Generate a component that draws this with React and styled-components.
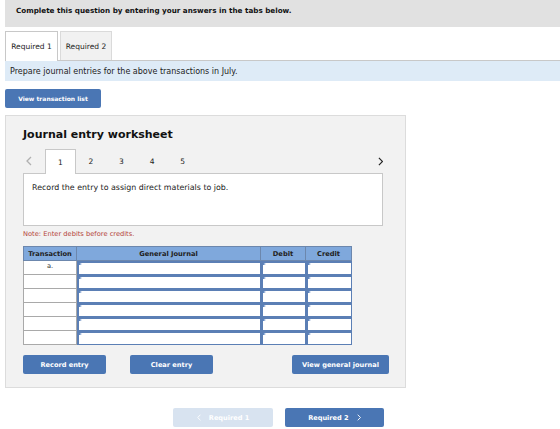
import React from 'react';
import styled, { createGlobalStyle } from 'styled-components';

const GlobalStyle = createGlobalStyle`
  body {
    margin: 0;
    background: #fff;
    font-family: "DejaVu Sans", Verdana, sans-serif;
    color: #222;
  }
`;

const Page = styled.div`
  width: 560px;
  height: 429px;
  padding-left: 5px;
  box-sizing: border-box;
  overflow: hidden;
`;

const Banner = styled.div`
  height: 27px;
  background: #e1e1e1;
  padding: 6px 0 0 11px;
  box-sizing: border-box;
  font-size: 7.2px;
  font-weight: bold;
  color: #111;
`;

const TabRow = styled.div`
  display: flex;
  gap: 2px;
  margin-top: 4px;
  height: 29px;
`;

const Tab = styled.div`
  width: ${({ wide }) => wide}px;
  box-sizing: border-box;
  border: 1px solid ${({ active }) => (active ? '#c8c8c8' : '#dadada')};
  border-bottom: none;
  background: ${({ active }) => (active ? '#fff' : '#f1f1f1')};
  font-size: 7.5px;
  display: flex;
  align-items: center;
  justify-content: center;
  color: #222;
  position: relative;
  z-index: 1;
  margin-bottom: ${({ active }) => (active ? '-1px' : '0')};
  height: ${({ active }) => (active ? '30px' : '29px')};
`;

const InfoBand = styled.div`
  height: 21px;
  border-top: 1px solid #c8c8c8;
  background: #deebf7;
  padding-left: 5px;
  box-sizing: border-box;
  font-size: 8px;
  display: flex;
  align-items: center;
`;

const Button = styled.div`
  width: ${({ wide }) => wide}px;
  height: 19px;
  background: ${({ disabled }) => (disabled ? '#d8e3f0' : '#4a76b4')};
  color: #fff;
  border-radius: 2px;
  font-size: ${({ small }) => (small ? '6px' : '6.6px')};
  font-weight: bold;
  display: flex;
  align-items: center;
  justify-content: center;
  gap: 8px;
`;

const TopAction = styled.div`
  margin-top: 8px;
`;

const Panel = styled.div`
  margin-top: 7px;
  width: 401px;
  height: 273px;
  box-sizing: border-box;
  background: #f2f2f2;
  border: 1px solid #dcdcdc;
  padding: 0 0 0 17px;
`;

const Title = styled.div`
  font-size: 11px;
  font-weight: bold;
  color: #111;
  margin-top: 12px;
  height: 14px;
`;

const StepNav = styled.div`
  display: flex;
  align-items: stretch;
  height: 24px;
  margin-top: 7px;
  width: 360px;
  position: relative;
  z-index: 1;
`;

const Arrow = styled.div`
  width: 22px;
  display: flex;
  align-items: center;
  justify-content: ${({ right }) => (right ? 'flex-end' : 'flex-start')};
  padding-left: ${({ right }) => (right ? '0' : '3px')};
  margin-left: ${({ right }) => (right ? 'auto' : '0')};
  box-sizing: border-box;
`;

const Step = styled.div`
  width: 30.6px;
  box-sizing: border-box;
  display: flex;
  align-items: center;
  justify-content: center;
  font-size: 7.5px;
  background: ${({ active }) => (active ? '#fff' : 'transparent')};
  border: 1px solid ${({ active }) => (active ? '#c8c8c8' : 'transparent')};
  border-bottom: none;
  height: ${({ active }) => (active ? '25px' : '24px')};
`;

const Prompt = styled.div`
  width: 360px;
  height: 53px;
  box-sizing: border-box;
  background: #fff;
  border: 1px solid #c8c8c8;
  padding: 9px 0 0 8px;
  font-size: 7.9px;
`;

const Note = styled.div`
  color: #b5453a;
  font-size: 6.7px;
  margin-top: 4px;
  height: 16px;
`;

const Grid = styled.div`
  display: grid;
  grid-template-columns: 54px 184px 45px 46px;
  width: 329px;
`;

const HeadCell = styled.div`
  height: 15px;
  background: #7fa8dc;
  border: 1px solid #6c87ad;
  border-left-width: ${({ first }) => (first ? '1px' : '0')};
  box-sizing: border-box;
  font-size: 6.7px;
  font-weight: bold;
  color: #222;
  display: flex;
  align-items: center;
  justify-content: center;
`;

const TxCell = styled.div`
  height: 14px;
  background: #fff;
  border: 1px solid #a9a9a9;
  border-top: none;
  box-sizing: border-box;
  font-size: 6.7px;
  color: #333;
  display: flex;
  justify-content: center;
  padding-top: 1px;
`;

const InputCell = styled.div`
  height: 14px;
  background: #fff;
  box-sizing: border-box;
  border: 1px solid #5b7fb5;
  border-left-width: 2px;
  border-top-width: 2px;
  position: relative;
  &::before {
    content: '';
    position: absolute;
    left: 0;
    top: 0;
    border-left: 3px solid #3f6fb3;
    border-top: 1.5px solid transparent;
    border-bottom: 1.5px solid transparent;
  }
`;

const ButtonRow = styled.div`
  display: flex;
  width: 366px;
  margin-top: 10px;
`;

const Spacer = styled.div`
  width: ${({ w }) => (w ? `${w}px` : 'auto')};
  flex: ${({ w }) => (w ? 'none' : '1')};
`;

const BottomNav = styled.div`
  display: flex;
  gap: 12px;
  margin: 20px 0 0 168px;
`;

const Chevron = ({ dir = 'right', color = '#222', size = 8 }) => (
  <svg width={size * 0.6} height={size} viewBox="0 0 6 10">
    <polyline
      points={dir === 'right' ? '1,1 5,5 1,9' : '5,1 1,5 5,9'}
      fill="none"
      stroke={color}
      strokeWidth="1.3"
    />
  </svg>
);

const rows = ['a.', '', '', '', '', ''];

export default function App() {
  return (
    <>
      <GlobalStyle />
      <Page>
        <Banner>Complete this question by entering your answers in the tabs below.</Banner>
        <TabRow>
          <Tab active wide={53}>Required 1</Tab>
          <Tab wide={52}>Required 2</Tab>
        </TabRow>
        <InfoBand>Prepare journal entries for the above transactions in July.</InfoBand>
        <TopAction>
          <Button wide={96} small>View transaction list</Button>
        </TopAction>
        <Panel>
          <Title>Journal entry worksheet</Title>
          <StepNav>
            <Arrow>
              <Chevron dir="left" color="#b0b0b0" size={10} />
            </Arrow>
            {[1, 2, 3, 4, 5].map((n) => (
              <Step key={n} active={n === 1}>{n}</Step>
            ))}
            <Arrow right>
              <Chevron color="#222" size={9} />
            </Arrow>
          </StepNav>
          <Prompt>Record the entry to assign direct materials to job.</Prompt>
          <Note>Note: Enter debits before credits.</Note>
          <Grid>
            <HeadCell first>Transaction</HeadCell>
            <HeadCell>General Journal</HeadCell>
            <HeadCell>Debit</HeadCell>
            <HeadCell>Credit</HeadCell>
            {rows.map((r, i) => (
              <React.Fragment key={i}>
                <TxCell>{r}</TxCell>
                <InputCell />
                <InputCell />
                <InputCell />
              </React.Fragment>
            ))}
          </Grid>
          <ButtonRow>
            <Button wide={83}>Record entry</Button>
            <Spacer w={24} />
            <Button wide={83}>Clear entry</Button>
            <Spacer />
            <Button wide={97}>View general journal</Button>
          </ButtonRow>
        </Panel>
        <BottomNav>
          <Button disabled wide={100}>
            <Chevron dir="left" color="#fff" size={7} />
            Required 1
          </Button>
          <Button wide={99}>
            Required 2
            <Chevron color="#fff" size={7} />
          </Button>
        </BottomNav>
      </Page>
    </>
  );
}
